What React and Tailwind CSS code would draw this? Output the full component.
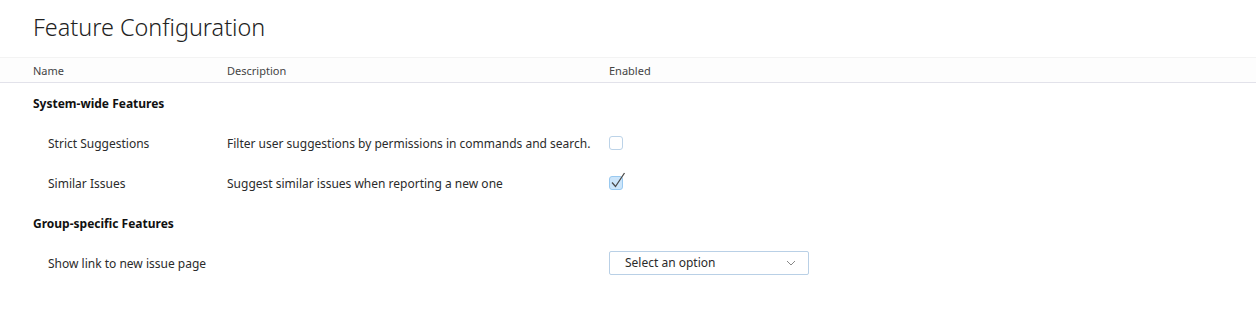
import React from 'react';

const Check = ({ checked }) => (
  <span className="relative inline-block w-[14px] h-[14px] -mt-[2px]">
    <span
      className={
        checked
          ? 'absolute inset-0 rounded-[3px] border border-[#99c9f0] bg-[#cce5fa]'
          : 'absolute inset-0 rounded-[3px] border border-[#bcd3e8] bg-white'
      }
    />
    {checked && (
      <svg className="absolute left-[1px] top-[-5px]" width="16" height="18" viewBox="0 0 16 18" fill="none">
        <path d="M2 11.5 L5.5 15.5 L14.5 2" stroke="#4a4a4a" strokeWidth="1.3" />
      </svg>
    )}
  </span>
);

const Row = ({ name, desc, children }) => (
  <div className="flex items-center h-[40px] pt-[1px] text-[12px] text-[#2b2b2b] whitespace-nowrap">
    <div className="w-[227px] pl-[48px] shrink-0">{name}</div>
    <div className="w-[382px] shrink-0">{desc}</div>
    <div className="flex">{children}</div>
  </div>
);

export default function App() {
  return (
    <div className="bg-white w-[1259px] h-[321px] font-['Noto_Sans',sans-serif] text-[#222]">
      <div className="w-[1256px]">
        <div className="h-[58px] flex items-center pl-[33px] pb-[2px] border-b border-[#f3f3f3]">
          <h1 className="text-[23.4px] font-light text-[#222]">Feature Configuration</h1>
        </div>
        <div className="h-[25px] flex items-center pt-[2px] text-[11px] text-[#444] border-b border-[#e2e2ea] bg-[#fdfdfd]">
          <div className="w-[227px] pl-[33px]">Name</div>
          <div className="w-[382px]">Description</div>
          <div>Enabled</div>
        </div>
        <div className="h-[40px] flex items-center pl-[33px] pt-[1px] text-[12px] font-bold text-[#111]">System-wide Features</div>
        <Row name="Strict Suggestions" desc="Filter user suggestions by permissions in commands and search.">
          <Check />
        </Row>
        <Row name="Similar Issues" desc="Suggest similar issues when reporting a new one">
          <Check checked />
        </Row>
        <div className="h-[40px] flex items-center pl-[33px] pt-[1px] text-[12px] font-bold text-[#111]">Group-specific Features</div>
        <Row name="Show link to new issue page" desc="">
          <div className="w-[200px] h-[24px] -mt-[2px] flex items-center justify-between border border-[#b9d0e6] rounded-[2px] pl-[15px] pr-[12px] text-[12px] text-[#2b2b2b]">
            <span>Select an option</span>
            <svg width="10" height="6" viewBox="0 0 10 6" fill="none">
              <path d="M1 1 L5 5 L9 1" stroke="#888" strokeWidth="1" />
            </svg>
          </div>
        </Row>
      </div>
    </div>
  );
}
